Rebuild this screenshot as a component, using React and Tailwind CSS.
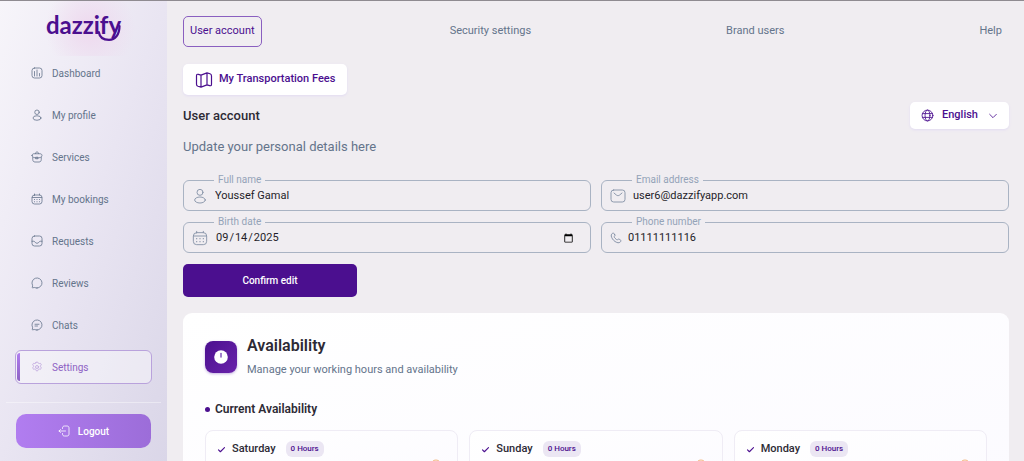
import React, { useState } from "react";

const Icon = ({ size = 12, stroke = 1.6, className = "", children }) => (
  <svg
    width={size}
    height={size}
    viewBox="0 0 24 24"
    fill="none"
    stroke="currentColor"
    strokeWidth={stroke}
    strokeLinecap="round"
    strokeLinejoin="round"
    className={`shrink-0 ${className}`}
    aria-hidden="true"
  >
    {children}
  </svg>
);

const ChartIcon = (p) => (
  <Icon {...p}>
    <rect x="2" y="2" width="20" height="20" rx="5" />
    <path d="M7 18V9M12 18V6M17 18v-5" />
  </Icon>
);

const UserIcon = (p) => (
  <Icon {...p}>
    <circle cx="12" cy="6.5" r="4.5" />
    <ellipse cx="12" cy="18" rx="8" ry="4.5" />
  </Icon>
);

const CaseIcon = (p) => (
  <Icon {...p}>
    <path d="M9 5c0-2 1-3 3-3s3 1 3 3M2 9c0-2 1.500-3.500 4-3.500h12c2.500 0 4 1.500 4 3.500 0 3-4 5-10 5S2 12 2 9Z" />
    <path d="M3.500 12.500V17c0 3 1.500 5 4.500 5h8c3 0 4.500-2 4.500-5v-4.500M10 12.500h4v3h-4z" />
  </Icon>
);

const CalendarIcon = (p) => (
  <Icon {...p}>
    <rect x="2" y="4" width="20" height="18" rx="5" />
    <path d="M7 4V2M17 4V2M2.500 9h19" />
    <path d="M7 13h.01M12 13h.01M17 13h.01M7 17.500h.01M12 17.500h.01M17 17.500h.01" strokeWidth="2" />
  </Icon>
);

const InboxIcon = (p) => (
  <Icon {...p}>
    <rect x="2" y="2" width="20" height="20" rx="5" />
    <path d="M2 12.500h3.500c1.200 0 1.800.6 2.500 1.700.9 1.500 2 2.300 4 2.300s3.100-.8 4-2.300c.7-1.100 1.300-1.700 2.500-1.700H22" />
  </Icon>
);

const ChatIcon = (p) => (
  <Icon {...p}>
    <path d="M12 22a10 10 0 1 0-9-5.600c.2.5.3 1 .2 1.500L2.500 21c-.1.500.3.800.8.700l3.100-.7c.5-.1 1 0 1.400.2A10 10 0 0 0 12 22Z" />
  </Icon>
);

const ChatLinesIcon = (p) => (
  <Icon {...p}>
    <path d="M12 22a10 10 0 1 0-9-5.600c.2.5.3 1 .2 1.500L2.500 21c-.1.500.3.800.8.700l3.100-.7c.5-.1 1 0 1.400.2A10 10 0 0 0 12 22Z" />
    <path d="M8 10.500h8M8 14h5" />
  </Icon>
);

const GearIcon = (p) => (
  <Icon {...p}>
    <circle cx="12" cy="12" r="3" />
    <path d="M9.800 3.500C10 2.500 10.800 2 12 2s2 .5 2.200 1.500c.2 1.300 1.700 2 2.900 1.500 1.300-.6 2.300-.3 3 .9.700 1.200.5 2.100-.5 2.900-1.100.8-1.100 2.600 0 3.400 1 .8 1.200 1.700.5 3-.7 1.200-1.700 1.500-2.900 1-1.300-.6-2.800.2-3 1.600-.2 1.500-1 2.200-2.200 2.200s-2-.7-2.200-2.200c-.2-1.400-1.700-2.200-3-1.600-1.200.5-2.200.2-2.900-1-.7-1.300-.5-2.200.5-3 1.100-.8 1.100-2.600 0-3.400-1-.8-1.200-1.700-.5-2.900.7-1.200 1.700-1.500 3-.9 1.200.5 2.700-.2 2.900-1.500Z" />
  </Icon>
);

const LogoutIcon = (p) => (
  <Icon {...p}>
    <path d="M9 7V6c0-2.500 1.500-4 4-4h5c2.500 0 4 1.500 4 4v12c0 2.500-1.500 4-4 4h-5c-2.500 0-4-1.500-4-4v-1" />
    <path d="M15 12H2M5 9l-3 3 3 3" />
  </Icon>
);

const MapIcon = (p) => (
  <Icon {...p}>
    <path d="M2 6.500c0-2 .8-2.500 2.500-2l3.500 1 8-3 4 1.200c1.500.5 2 1.300 2 2.800v11c0 2-.8 2.500-2.500 2L16 18.500l-8 3-4-1.200c-1.500-.5-2-1.300-2-2.800v-11ZM8 5.500v16M16 2.500v16" />
  </Icon>
);

const GlobeIcon = (p) => (
  <Icon {...p}>
    <circle cx="12" cy="12" r="10" />
    <ellipse cx="12" cy="12" rx="4.500" ry="10" />
    <path d="M3 8.500h18M3 15.500h18" />
  </Icon>
);

const MailIcon = (p) => (
  <Icon {...p}>
    <rect x="1.500" y="3" width="21" height="18" rx="4" />
    <path d="m6 7.500 3.500 3c1.700 1.300 3.300 1.300 5 0l3.500-3" />
  </Icon>
);

const PhoneIcon = (p) => (
  <Icon {...p}>
    <path d="M9.500 5.500 8.300 3.400C7.500 2 5.800 1.700 4.600 2.900 2.600 4.800 1.800 7 3.200 10.500c1.900 4.700 5.600 8.400 10.300 10.300 3.500 1.400 5.700.6 7.600-1.400 1.200-1.200.9-2.900-.5-3.700l-2.100-1.200c-1-.6-2-.4-2.800.4-1 1-2 .9-3.700-.6l-2.300-2.300C8.200 10.300 8.100 9.300 9.100 8.300c.8-.8 1-1.800.4-2.800Z" />
  </Icon>
);

const menu = [
  { label: "Dashboard", icon: ChartIcon },
  { label: "My profile", icon: UserIcon },
  { label: "Services", icon: CaseIcon },
  { label: "My bookings", icon: CalendarIcon },
  { label: "Requests", icon: InboxIcon },
  { label: "Reviews", icon: ChatIcon },
  { label: "Chats", icon: ChatLinesIcon },
  { label: "Settings", icon: GearIcon },
];

const tabs = ["User account", "Security settings", "Brand users", "Help"];
const days = ["Saturday", "Sunday", "Monday"];

function Logo() {
  return (
    <a href="#home" className="relative block self-start text-[24px] leading-6 font-bold text-[#4b0f8f] font-[Lato,sans-serif]">
      dazzify
      {/* smile under the last letters */}
      <svg
        className="absolute top-2 right-0"
        width="24"
        height="20"
        viewBox="0 0 24 20"
        fill="none"
        stroke="currentColor"
        strokeWidth="2.2"
        strokeLinecap="round"
        aria-hidden="true"
      >
        <path d="M1.800 11C2.500 16 6 18.800 12 18.800S22.500 14 22.500 5" />
      </svg>
    </a>
  );
}

function Sidebar() {
  return (
    <aside className="flex w-[167px] shrink-0 flex-col bg-linear-to-br from-[#f7f5fa] via-[#e9e5f2] to-[#dad6e8]">
      <div className="flex h-[55px] justify-center bg-[radial-gradient(circle_at_54%_50%,#eed8ee,transparent_45px)] pt-3">
        <Logo />
      </div>
      <nav className="flex flex-col gap-2 px-[15px]">
        {menu.map(({ label, icon: ItemIcon }) => {
          const active = label === "Settings";
          return (
            <a
              key={label}
              href="#menu"
              aria-current={active ? "page" : undefined}
              className={`relative flex h-[34px] items-center gap-[9px] rounded-md border px-[15px] text-[10px]
                ${active ? "border-[#b9a2dc] bg-white/40 text-[#8e62c4]" : "border-transparent text-[#64748b]"}`}
            >
              {active && (
                <span className="absolute inset-y-[2px] left-px w-[3px] rounded-l-sm bg-linear-to-b from-[#b07cf0] to-[#8d62c4]" />
              )}
              <ItemIcon className={active ? "text-[#bda2dd]" : ""} />
              {label}
            </a>
          );
        })}
      </nav>
      <hr className="mx-[6px] mt-[18px] border-white/40" />
      <div className="px-4 pt-[11px]">
        <button className="flex h-[34px] w-full items-center justify-center gap-2 rounded-[10px] bg-linear-to-r from-[#b17df0] to-[#9c6dd9] text-[10px] font-medium text-white">
          <LogoutIcon />
          Logout
        </button>
      </div>
    </aside>
  );
}

function Field({ id, label, icon, type = "text", value, onChange, narrow }) {
  return (
    <fieldset className="min-w-0 rounded-md border border-[#a9b3c3] pr-[14px] pl-2">
      <legend className="ml-[22px] px-1 text-[10px] leading-3 text-[#94a3b8]">
        <label htmlFor={id}>{label}</label>
      </legend>
      <div className={`flex h-6 items-center pb-1 text-[#8793a8] ${narrow ? "gap-[6px]" : "gap-[7px]"}`}>
        {icon}
        <input
          id={id}
          type={type}
          value={value}
          onChange={(e) => onChange(id, e.target.value)}
          className="h-4 w-full min-w-0 bg-transparent text-[11px] text-[#1f1d29] outline-none"
        />
      </div>
    </fieldset>
  );
}

function DayCard({ day }) {
  return (
    <div className="h-20 rounded-lg border border-[#efecf5] bg-linear-to-br from-white to-[#fbfaff] px-[11px] py-[10px]">
      <div className="flex h-4 items-center">
        <Icon size={9} stroke={3} className="text-[#4b0f8f]">
          <path d="m4 13 5 5L20 7" />
        </Icon>
        <span className="ml-[6px] text-[11px] font-medium text-[#2d2a35]">{day}</span>
        <span className="ml-[10px] flex h-4 items-center rounded-md bg-[#ebe6f3] px-[5px] text-[8px] font-medium text-[#4b0f8f]">
          0 Hours
        </span>
      </div>
      <div className="mt-[2px] flex justify-end pr-1 text-[#f0a35e]">
        <Icon size={12}>
          <circle cx="12" cy="12" r="10" />
          <path d="M12 7v6M12 16.500h.01" />
        </Icon>
      </div>
    </div>
  );
}

export default function App() {
  const [form, setForm] = useState({
    name: "Youssef Gamal",
    email: "user6@dazzifyapp.com",
    birth: "2025-09-14",
    phone: "01111111116",
  });
  const update = (key, value) => setForm({ ...form, [key]: value });

  return (
    <div className="flex h-screen overflow-hidden border-t border-[#8f8b91] bg-[#f0edf1] font-[Roboto,sans-serif]">
      <Sidebar />
      <main className="min-w-0 flex-1 overflow-y-auto pt-[15px] pr-[15px] pl-4 [scrollbar-width:none]">
        {/* Tabs */}
        <nav className="flex h-[31px] justify-between text-[11px] text-[#64748b]">
          {tabs.map((tab, i) => (
            <a
              key={tab}
              href="#tab"
              className={`flex items-center rounded-[5px] border px-[6px]
                ${i === 0 ? "border-[#8a5fc0] text-[#4b0f8f]" : "border-transparent"}`}
            >
              {tab}
            </a>
          ))}
        </nav>

        <button className="mt-[17px] flex h-[31px] items-center gap-[6px] rounded-[5px] bg-white px-3 text-[11px] font-medium text-[#4b0f8f] shadow-sm shadow-[#e4def2]">
          <MapIcon size={18} />
          My Transportation Fees
        </button>

        <div className="mt-[7px] flex h-[27px] items-center justify-between">
          <h1 className="text-[13px] font-medium text-[#2d2a35]">User account</h1>
          <button className="flex h-[27px] items-center rounded-[5px] bg-white px-[11px] text-[11px] font-medium text-[#4b0f8f] shadow-sm shadow-[#e4def2]">
            <GlobeIcon size={13} />
            <span className="mr-[10px] ml-2">English</span>
            <Icon size={10} stroke={2}>
              <path d="m4 8 8 8 8-8" />
            </Icon>
          </button>
        </div>
        <p className="mt-2 text-[13px] leading-5 text-[#64748b]">Update your personal details here</p>

        <form onSubmit={(e) => e.preventDefault()}>
          <div className="mt-[17px] grid grid-cols-2 gap-x-[10px] gap-y-[5px]">
            <Field id="name" label="Full name" icon={<UserIcon size={16} stroke={1.4} />} value={form.name} onChange={update} />
            <Field id="email" label="Email address" icon={<MailIcon size={16} stroke={1.4} />} value={form.email} onChange={update} />
            <Field id="birth" label="Birth date" type="date" icon={<CalendarIcon size={16} stroke={1.4} />} value={form.birth} onChange={update} />
            <Field id="phone" label="Phone number" narrow icon={<PhoneIcon size={12} stroke={2} />} value={form.phone} onChange={update} />
          </div>
          <button
            type="submit"
            className="mt-[11px] h-[33px] w-[174px] rounded-[5px] bg-[#4b0f8f] text-[10px] font-medium text-white"
          >
            Confirm edit
          </button>
        </form>

        {/* Availability */}
        <section className="mt-4 rounded-[9px] bg-linear-to-br from-white to-[#fbfaff] p-[22px]">
          <div className="flex items-center gap-[10px]">
            <div className="flex size-8 items-center justify-center rounded-lg bg-linear-to-br from-[#4b0f8f] to-[#6a22ab] shadow-sm shadow-[#cbbbe4]">
              <svg width="14" height="14" viewBox="0 0 14 14" aria-hidden="true">
                <circle cx="7" cy="7" r="6.800" fill="#fff" />
                <path d="M7 3.500V7" stroke="#8a5fc0" strokeWidth="1.600" strokeLinecap="round" />
              </svg>
            </div>
            <div>
              <h2 className="text-base leading-[22px] font-semibold text-[#2d2a35]">Availability</h2>
              <p className="mt-[5px] text-[11px] leading-4 text-[#64748b]">Manage your working hours and availability</p>
            </div>
          </div>

          <h3 className="mt-[23px] flex items-center gap-[5px] text-xs leading-4 font-semibold text-[#2d2a35]">
            <span className="size-[5px] rounded-full bg-[#4b0f8f]" />
            Current Availability
          </h3>
          <div className="mt-[13px] grid grid-cols-3 gap-[11px]">
            {days.map((day) => (
              <DayCard key={day} day={day} />
            ))}
          </div>
        </section>
      </main>
    </div>
  );
}
